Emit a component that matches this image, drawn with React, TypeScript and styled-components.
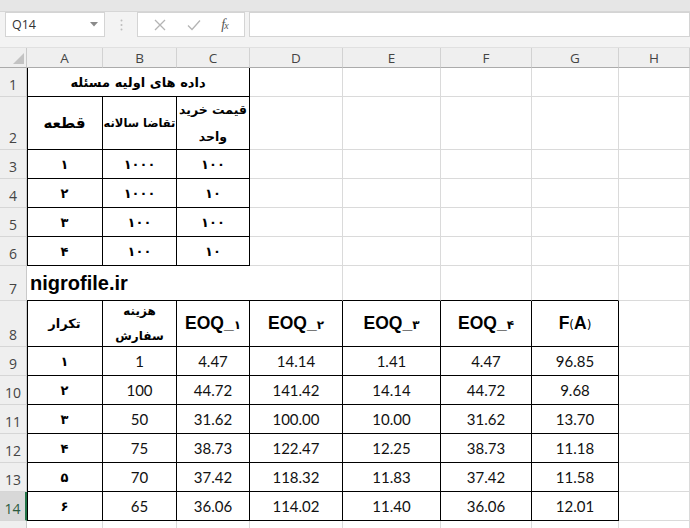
import React from 'react';
import styled, { createGlobalStyle } from 'styled-components';

const GRID = '#dadada';
const INK = '#000';

const Global = createGlobalStyle`
  html, body { margin: 0; padding: 0; background: #fff; overflow: hidden; }
  * { box-sizing: border-box; }
`;

const Frame = styled.div`
  width: 690px;
  height: 528px;
  overflow: hidden;
  display: flex;
  flex-direction: column;
  background: #fff;
`;

const TopBand = styled.div`
  height: 12px;
  flex: none;
  background: #e6e6e6;
  border-bottom: 1px solid #d6d6d6;
`;

const FormulaBar = styled.div`
  height: 36px;
  flex: none;
  display: flex;
  align-items: flex-start;
  padding: 0 0 0 5px;
  background: #f3f3f3;
  border-bottom: 1px solid #e0e0e0;
`;

const Box = styled.div<{ $w?: number }>`
  height: 25px;
  width: ${(p) => (p.$w ? `${p.$w}px` : 'auto')};
  flex: ${(p) => (p.$w ? 'none' : '1')};
  background: #fff;
  border: 1px solid #d4d4d4;
  display: flex;
  align-items: center;
`;

const NameBox = styled(Box)`
  padding: 0 6px 0 6px;
  justify-content: space-between;
  font-family: 'Open Sans', 'Liberation Sans', sans-serif;
  font-size: 12.5px;
  color: #333;
`;

const Grip = styled.div`
  width: 32px;
  height: 25px;
  display: flex;
  align-items: center;
  justify-content: center;
  flex: none;
`;

const Actions = styled(Box)`
  justify-content: space-around;
  padding: 0 6px;
  margin-right: 4px;
`;

const Fx = styled.span`
  font-family: 'Liberation Serif', serif;
  font-style: italic;
  font-size: 14px;
  color: #555;
  letter-spacing: -1px;
  & > small { font-size: 10px; }
`;

const Sheet = styled.div`
  display: grid;
  grid-template-columns: 27px 76px 74px 73px 93px 98px 91px 87px 71px;
  grid-template-rows: 20px 29px 53px 29px 29px 29px 29px 35px 46px repeat(6, 29px) 29px;
`;

const Corner = styled.div`
  background: #efefef;
  border-right: 1px solid #c9c9c9;
  border-bottom: 1px solid #ababab;
  display: flex;
  align-items: flex-end;
  justify-content: flex-end;
  padding: 0 2px 3px 0;
`;

const ColHead = styled.div`
  background: #efefef;
  border-right: 1px solid #d2d2d2;
  border-bottom: 1px solid #ababab;
  display: flex;
  align-items: center;
  justify-content: center;
  font-family: 'Open Sans', 'Liberation Sans', sans-serif;
  font-size: 13.5px;
  color: #444;
`;

const RowHead = styled.div<{ $active?: boolean }>`
  background: ${(p) => (p.$active ? '#d8d8d8' : '#efefef')};
  border-right: ${(p) => (p.$active ? '2px solid #217346' : '1px solid #c9c9c9')};
  border-bottom: 1px solid #d6d6d6;
  display: flex;
  align-items: flex-end;
  justify-content: center;
  padding-bottom: 2px;
  font-family: 'Open Sans', 'Liberation Sans', sans-serif;
  font-size: 14px;
  color: ${(p) => (p.$active ? '#2b5a3e' : '#444')};
`;

const Cell = styled.div<{
  $r?: string;
  $b?: string;
  $l?: boolean;
  $t?: boolean;
  $span?: number;
  $left?: boolean;
}>`
  grid-column: ${(p) => (p.$span ? `span ${p.$span}` : 'auto')};
  border-right: 1px solid ${(p) => p.$r || GRID};
  border-bottom: 1px solid ${(p) => p.$b || GRID};
  box-shadow: ${(p) =>
    [p.$l ? `inset 1px 0 0 ${INK}` : '', p.$t ? `inset 0 1px 0 ${INK}` : '']
      .filter(Boolean)
      .join(', ') || 'none'};
  display: flex;
  align-items: center;
  justify-content: ${(p) => (p.$left ? 'flex-start' : 'center')};
  padding-left: ${(p) => (p.$left ? '3px' : '0')};
  overflow: hidden;
  white-space: nowrap;
`;

const Fa = styled.div<{ $lh?: number; $size?: number }>`
  direction: rtl;
  font-family: 'DejaVu Sans', sans-serif;
  font-weight: bold;
  font-size: ${(p) => p.$size || 13}px;
  line-height: ${(p) => (p.$lh ? `${p.$lh}px` : 'normal')};
  color: #000;
  text-align: center;
`;

const Num = styled.span`
  font-family: Lato, 'Liberation Sans', sans-serif;
  font-size: 15px;
  color: #111;
`;

const Site = styled.span`
  font-family: 'Liberation Sans', Arial, sans-serif;
  font-weight: bold;
  font-size: 20px;
  color: #000;
`;

const Eoq = styled.span`
  direction: ltr;
  font-family: 'Liberation Sans', Arial, sans-serif;
  font-weight: bold;
  font-size: 17.5px;
  color: #000;
  & > small {
    font-family: 'DejaVu Sans', sans-serif;
    font-size: 12px;
  }
`;

const Paren = styled.small`
  font-family: 'DejaVu Sans', sans-serif;
  font-weight: normal;
  font-size: 11px;
`;

const cols = ['A', 'B', 'C', 'D', 'E', 'F', 'G', 'H'];

const Empty = ({ n, r, b }: { n: number; r?: string; b?: string }) => (
  <>
    {Array.from({ length: n }).map((_, i) => (
      <Cell key={i} $r={r} $b={b} />
    ))}
  </>
);

const table1 = [
  ['۱', '۱۰۰۰', '۱۰۰'],
  ['۲', '۱۰۰۰', '۱۰'],
  ['۳', '۱۰۰', '۱۰۰'],
  ['۴', '۱۰۰', '۱۰'],
];

const table2 = [
  ['۱', '1', '4.47', '14.14', '1.41', '4.47', '96.85'],
  ['۲', '100', '44.72', '141.42', '14.14', '44.72', '9.68'],
  ['۳', '50', '31.62', '100.00', '10.00', '31.62', '13.70'],
  ['۴', '75', '38.73', '122.47', '12.25', '38.73', '11.18'],
  ['۵', '70', '37.42', '118.32', '11.83', '37.42', '11.58'],
  ['۶', '65', '36.06', '114.02', '11.40', '36.06', '12.01'],
];

export default function App() {
  return (
    <Frame>
      <Global />
      <TopBand />
      <FormulaBar>
        <NameBox $w={100}>
          <span>Q14</span>
          <svg width="8" height="5" viewBox="0 0 8 5">
            <path d="M0 0 L8 0 L4 4.5 Z" fill="#8a8a8a" />
          </svg>
        </NameBox>
        <Grip>
          <svg width="3" height="12" viewBox="0 0 3 12">
            <circle cx="1.5" cy="1.5" r="1" fill="#bdbdbd" />
            <circle cx="1.5" cy="6" r="1" fill="#bdbdbd" />
            <circle cx="1.5" cy="10.5" r="1" fill="#bdbdbd" />
          </svg>
        </Grip>
        <Actions $w={108}>
          <svg width="12" height="12" viewBox="0 0 12 12">
            <path d="M1 1 L11 11 M11 1 L1 11" stroke="#b4b4b4" strokeWidth="1.3" fill="none" />
          </svg>
          <svg width="14" height="12" viewBox="0 0 14 12">
            <path d="M1 6.5 L5 10.5 L13 1.5" stroke="#b4b4b4" strokeWidth="1.3" fill="none" />
          </svg>
          <Fx>
            f<small>x</small>
          </Fx>
        </Actions>
        <Box />
      </FormulaBar>
      <Sheet>
        <Corner>
          <svg width="11" height="11" viewBox="0 0 11 11">
            <path d="M11 0 L11 11 L0 11 Z" fill="#c3c3c3" />
          </svg>
        </Corner>
        {cols.map((c) => (
          <ColHead key={c}>{c}</ColHead>
        ))}

        {/* row 1 */}
        <RowHead>1</RowHead>
        <Cell $span={3} $r={INK} $b={INK} $l>
          <Fa>داده های اولیه مسئله</Fa>
        </Cell>
        <Empty n={5} />

        {/* row 2 */}
        <RowHead>2</RowHead>
        <Cell $r={INK} $b={INK} $l>
          <Fa $size={15}>قطعه</Fa>
        </Cell>
        <Cell $r={INK} $b={INK}>
          <Fa $size={11.5}>تقاضا سالانه</Fa>
        </Cell>
        <Cell $r={INK} $b={INK}>
          <Fa $lh={27} $size={12.5}>
            قیمت خرید
            <br />
            واحد
          </Fa>
        </Cell>
        <Empty n={5} />

        {/* rows 3-6 */}
        {table1.map((row, i) => (
          <React.Fragment key={i}>
            <RowHead>{i + 3}</RowHead>
            {row.map((v, j) => (
              <Cell key={j} $r={INK} $b={INK} $l={j === 0}>
                <Fa>{v}</Fa>
              </Cell>
            ))}
            <Empty n={5} />
          </React.Fragment>
        ))}

        {/* row 7 */}
        <RowHead>7</RowHead>
        <Cell $span={4} $b={INK} $left>
          <Site>nigrofile.ir</Site>
        </Cell>
        <Empty n={3} b={INK} />
        <Empty n={1} />

        {/* row 8 */}
        <RowHead>8</RowHead>
        <Cell $r={INK} $b={INK} $l>
          <Fa>تکرار</Fa>
        </Cell>
        <Cell $r={INK} $b={INK}>
          <Fa $lh={25} $size={12}>
            هزینه
            <br />
            سفارش
          </Fa>
        </Cell>
        {['۱', '۲', '۳', '۴'].map((d) => (
          <Cell key={d} $r={INK} $b={INK}>
            <Eoq>
              EOQ_<small>{d}</small>
            </Eoq>
          </Cell>
        ))}
        <Cell $r={INK} $b={INK}>
          <Eoq>
            F<Paren>(</Paren>A<Paren>)</Paren>
          </Eoq>
        </Cell>
        <Empty n={1} />

        {/* rows 9-14 */}
        {table2.map((row, i) => (
          <React.Fragment key={i}>
            <RowHead $active={i === 5}>{i + 9}</RowHead>
            {row.map((v, j) => (
              <Cell key={j} $r={INK} $b={INK} $l={j === 0}>
                {j === 0 ? <Fa>{v}</Fa> : <Num>{v}</Num>}
              </Cell>
            ))}
            <Empty n={1} />
          </React.Fragment>
        ))}

        {/* row 15 */}
        <RowHead>15</RowHead>
        <Empty n={8} />
      </Sheet>
    </Frame>
  );
}
